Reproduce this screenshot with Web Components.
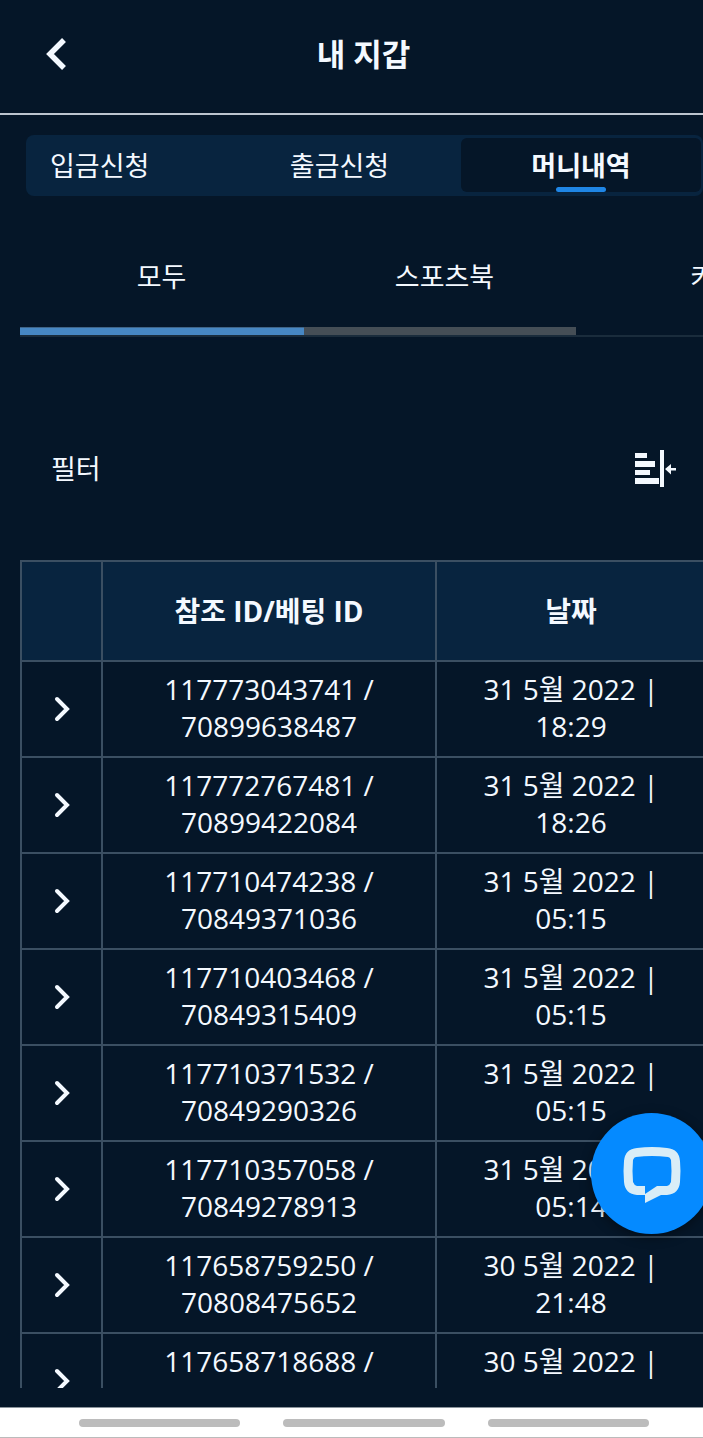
<!DOCTYPE html>
<html lang="ko">
<head>
<meta charset="utf-8">
<meta name="viewport" content="width=device-width, initial-scale=1">
<title>내 지갑</title>
<style>
  :root {
    --bg: #051628;
    --surface: #08243f;
    --ink: #f4f9ff;
    --line: #3b4f62;
    --accent: #1f86e6;
    --fab: #058aff;
  }
  body {
    margin: 0; background: var(--bg); color: var(--ink);
    font: 27px/37px "Open Sans", "Noto Sans CJK KR", sans-serif;
  }
</style>
</head>
<body>
<wallet-app>
  <wallet-header slot="header">내 지갑</wallet-header>
  <wallet-tabs active="2">
    <span>입금신청</span>
    <span>출금신청</span>
    <span>머니내역</span>
  </wallet-tabs>
  <wallet-categories>
    <span>모두</span>
    <span>스포츠북</span>
    <span>카지노</span>
  </wallet-categories>
  <wallet-filter>필터</wallet-filter>
  <wallet-history></wallet-history>
  <chat-button slot="overlay"></chat-button>
  <system-bar slot="footer"></system-bar>
</wallet-app>

<script>
'use strict';

const ROWS = [
  ['117773043741', '70899638487', '31 5월 2022', '18:29'],
  ['117772767481', '70899422084', '31 5월 2022', '18:26'],
  ['117710474238', '70849371036', '31 5월 2022', '05:15'],
  ['117710403468', '70849315409', '31 5월 2022', '05:15'],
  ['117710371532', '70849290326', '31 5월 2022', '05:15'],
  ['117710357058', '70849278913', '31 5월 2022', '05:14'],
  ['117658759250', '70808475652', '30 5월 2022', '21:48'],
  ['117658718688', '', '30 5월 2022', ''],
];

const RESET = `
  :host, * { box-sizing: border-box; }
  button { margin: 0; padding: 0; border: 0; background: none; color: inherit; font: inherit; cursor: pointer; }
  svg { display: block; }
`;

function mount(el, css, html) {
  el.attachShadow({ mode: 'open' }).innerHTML = `<style>${RESET}${css}</style>${html}`;
}

class WalletApp extends HTMLElement {
  constructor() {
    super();
    mount(this, `
      :host { display: flex; flex-direction: column; height: 100vh; overflow: hidden; }
      main { flex: 1; min-height: 0; overflow: hidden; margin-bottom: 19px; }
    `, `
      <slot name="header"></slot>
      <main><slot></slot></main>
      <slot name="overlay"></slot>
      <slot name="footer"></slot>
    `);
  }
}

// ── <wallet-header> ──────────────────────────────────────────────────────────
class WalletHeader extends HTMLElement {
  constructor() {
    super();
    mount(this, `
      :host { display: block; border-bottom: 2px solid #bcc5cf; }
      header { display: grid; grid-template-columns: 88px 1fr 64px; align-items: center; height: 113px; padding-bottom: 6px; }
      h1 { margin: 0; text-align: center; font-size: 31px; line-height: 44px; font-weight: 700; }
      button { justify-self: center; padding: 8px; margin-left: 24px; }
    `, `
      <header>
        <button type="button" aria-label="뒤로">
          <svg width="24" height="36" viewBox="0 0 24 36" fill="none" stroke="currentColor" stroke-width="5.5"><path d="M20 4 6 18 20 32"/></svg>
        </button>
        <h1><slot></slot></h1>
      </header>
    `);
  }
}

// ── <wallet-tabs active="n"> ─────────────────────────────────────────────────
class WalletTabs extends HTMLElement {
  connectedCallback() {
    if (this.shadowRoot) return;
    const active = Number(this.getAttribute('active')) || 0;
    const labels = [...this.querySelectorAll('span')];
    labels.forEach((s, i) => { s.slot = `t${i}`; });
    mount(this, `
      :host { display: block; padding: 20px 0 0 26px; }
      nav {
        display: grid; grid-template-columns: 190px 1fr 1fr; height: 61px;
        padding: 3px 2px 4px 3px; background: var(--surface); border-radius: 8px;
      }
      button { display: flex; flex-direction: column; align-items: center; justify-content: center; border-radius: 6px; }
      button:first-child { align-items: flex-start; padding-left: 21px; }
      .on { position: relative; margin-left: 1px; background: var(--bg); font-weight: 700; }
      .on::after {
        content: ""; position: absolute; bottom: 0; left: 50%; width: 50px; height: 5px;
        margin-left: -25px; border-radius: 3px; background: var(--accent);
      }
    `, `<nav role="tablist">${labels.map((_, i) => `
        <button type="button" role="tab" aria-selected="${i === active}" class="${i === active ? 'on' : ''}"><slot name="t${i}"></slot></button>`).join('')}
      </nav>`);
  }
}

class WalletCategories extends HTMLElement {
  connectedCallback() {
    if (this.shadowRoot) return;
    const labels = [...this.querySelectorAll('span')];
    labels.forEach((s, i) => { s.slot = `c${i}`; });
    mount(this, `
      :host { display: block; padding: 40px 0 0 20px; }
      nav { display: flex; overflow: hidden; }
      button { flex: 0 0 283px; height: 91px; padding-bottom: 11px; }
      .track { border-bottom: 2px solid #1a2c3c; }
      .thumb { width: 556px; max-width: 100%; height: 8px; background: #454e56; }
      .now { width: 51%; height: 8px; background: #4787c3; border-top: 1px solid #3f6488; }
    `, `
      <nav role="tablist">${labels.map((_, i) => `
        <button type="button" role="tab" aria-selected="${i === 0}"><slot name="c${i}"></slot></button>`).join('')}
      </nav>
      <div class="track"><div class="thumb"><div class="now"></div></div></div>
    `);
  }
}

// ── <wallet-filter> ──────────────────────────────────────────────────────────
class WalletFilter extends HTMLElement {
  constructor() {
    super();
    mount(this, `
      :host {
        display: flex; align-items: center; justify-content: space-between;
        height: 223px; padding: 40px 27px 0 51px;
      }
    `, `
      <span><slot></slot></span>
      <button type="button" aria-label="필터 열기">
        <svg width="42" height="38" viewBox="0 0 42 38" fill="currentColor">
          <path d="M1 3h12v5H1zM1 11h20v6H1zM1 20h15v5H1zM1 28h24v6H1zM26 0h4v37h-4zM31 19l6-5v4h5v2.500h-5v4z"/>
        </svg>
      </button>
    `);
  }
}

// ── <wallet-history> ─────────────────────────────────────────────────────────
class WalletHistory extends HTMLElement {
  constructor() {
    super();
    const body = ROWS.map(([ref, bet, day, time]) => `
      <tr>
        <td><button type="button" aria-label="${ref} 자세히">
          <svg width="20" height="28" viewBox="0 0 20 28" fill="none" stroke="currentColor" stroke-width="4" stroke-linecap="round"><path d="M5 4 15 14 5 24"/></svg>
        </button></td>
        <td>${ref} /<br>${bet}</td>
        <td>${day} |<br>${time}</td>
      </tr>`).join('');
    mount(this, `
      :host { display: block; padding-left: 20px; overflow: hidden; }
      table { width: 687px; min-width: 100%; table-layout: fixed; border-collapse: collapse; text-align: center; font-size: 28px; }
      th, td { border: 2px solid var(--line); padding: 9px 8px; }
      th { height: 100px; background: var(--surface); font-weight: 700; }
      td { height: 96px; vertical-align: top; }
      td:first-child { vertical-align: middle; }
      .open { width: 81px; }
      .ref { width: 334px; }
      td button { display: block; margin: 0 auto; }
    `, `
      <table>
        <colgroup><col class="open"><col class="ref"><col></colgroup>
        <thead><tr><th></th><th>참조 ID/베팅 ID</th><th>날짜</th></tr></thead>
        <tbody>${body}</tbody>
      </table>
    `);
  }
}

// ── <chat-button> : floats over the table, partly past the right edge ────────
class ChatButton extends HTMLElement {
  constructor() {
    super();
    mount(this, `
      :host { position: fixed; right: -9px; bottom: 204px; }
      button {
        display: flex; align-items: center; justify-content: center;
        width: 121px; height: 121px; border-radius: 50%; background: var(--fab); color: #d9edf7;
        box-shadow: 0 3px 12px rgba(0, 0, 0, .4);
      }
    `, `
      <button type="button" aria-label="채팅">
        <svg width="58" height="58" viewBox="0 0 58 58" fill="currentColor" fill-rule="evenodd">
          <path d="M14 3Q29 1 44 3Q56 4 57 16Q58 26 57 37Q56 49 44 50H38L22 58V50H14Q2 49 1 37Q0 26 1 16Q2 4 14 3ZM13 12Q11 12 10 15Q9 26 10 37Q11 40 14 41H22V49L34 41H44Q47 40 48 37Q49 26 48 15Q47 12 45 12Q29 10 13 12Z"/>
        </svg>
      </button>
    `);
  }
}

// ── <system-bar> : gesture hints at the bottom of the phone ──────────────────
class SystemBar extends HTMLElement {
  constructor() {
    super();
    mount(this, `
      :host {
        display: flex; align-items: center; gap: 43px; height: 31px; padding: 0 54px 0 79px;
        background: #fff; border-top: 1px solid #8b949c; border-bottom: 1px solid #bbb;
      }
      i { flex: 1; height: 8px; border-radius: 4px; background: #bcbcbc; }
    `, '<i></i><i></i><i></i>');
  }
}

customElements.define('wallet-app', WalletApp);
customElements.define('wallet-header', WalletHeader);
customElements.define('wallet-tabs', WalletTabs);
customElements.define('wallet-categories', WalletCategories);
customElements.define('wallet-filter', WalletFilter);
customElements.define('wallet-history', WalletHistory);
customElements.define('chat-button', ChatButton);
customElements.define('system-bar', SystemBar);
</script>
</body>
</html>
